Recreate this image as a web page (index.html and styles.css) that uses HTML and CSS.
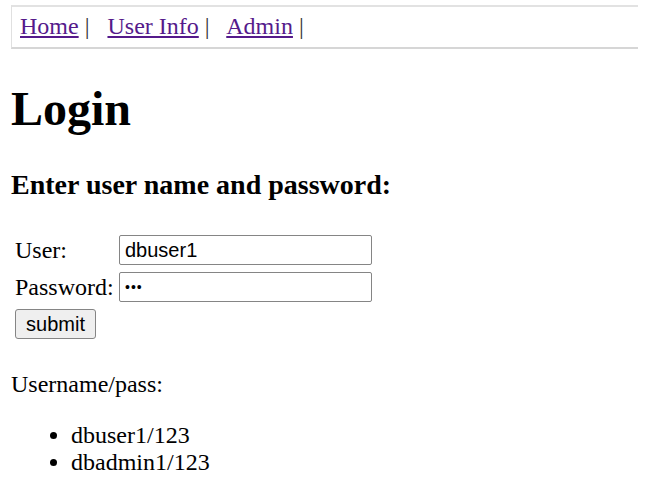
FILE: index.html
```html
<!DOCTYPE html>
<html>
<head>
<meta charset="utf-8">
<title>Login</title>
<link rel="stylesheet" href="styles.css">
</head>
<body>
<div class="nav"><a href="#">Home</a> | &nbsp; <a href="#">User Info</a> | &nbsp; <a href="#">Admin</a> |</div>
<h1 class="title">Login</h1>
<h3 class="subtitle">Enter user name and password:</h3>
<form class="login-form">
  <label class="field-label" for="user">User:</label>
  <input class="field-input" id="user" type="text" value="dbuser1">
  <label class="field-label" for="pass">Password:</label>
  <input class="field-input field-secret" id="pass" type="password" value="123">
  <button class="submit-btn" type="button">submit</button>
</form>
<p class="hint">Username/pass:</p>
<ul class="accounts">
  <li>dbuser1/123</li>
  <li>dbadmin1/123</li>
</ul>
</body>
</html>
```

FILE: styles.css
```css
html, body {
  background: #ffffff;
}
body {
  margin: 5px 8px 0 11px;
  font-family: "Liberation Serif", "Times New Roman", serif;
  font-size: 24px;
  line-height: 27px;
  color: #000000;
}
.nav {
  border-top: 2px solid #e2e2e2;
  border-bottom: 2px solid #d6d6d6;
  border-left: 1px solid #e0e0e0;
  border-right: none;
  padding: 6px 0 7px 8px;
  line-height: 27px;
  color: #333333;
}
.nav a {
  color: #551a8b;
  text-decoration: underline;
}
.title {
  font-size: 48px;
  line-height: 55px;
  font-weight: bold;
  margin: 32px 0 32px 0;
}
.subtitle {
  font-size: 28px;
  line-height: 32px;
  font-weight: bold;
  margin: 33px 0 0 0;
}
.login-form {
  display: grid;
  grid-template-columns: 98px 253px;
  grid-auto-rows: 30px;
  column-gap: 6px;
  row-gap: 7px;
  align-items: center;
  margin: 34px 0 0 4px;
  width: max-content;
}
.field-label {
  line-height: 27px;
}
.field-input {
  box-sizing: border-box;
  width: 253px;
  height: 30px;
  border: 1px solid #858585;
  border-radius: 2px;
  padding: 1px 5px;
  font-family: "Liberation Sans", Arial, sans-serif;
  font-size: 20px;
  color: #000000;
  background: #ffffff;
}
.field-secret {
  font-size: 14px;
  letter-spacing: 1px;
  padding-left: 5px;
}
.submit-btn {
  grid-column: 1;
  justify-self: start;
  box-sizing: border-box;
  width: 81px;
  height: 30px;
  padding: 0 10px;
  border: 1px solid #858585;
  border-radius: 3px;
  background: #efefef;
  font-family: "Liberation Sans", Arial, sans-serif;
  font-size: 20px;
  color: #000000;
}
.hint {
  margin: 32px 0 24px 0;
}
.accounts {
  margin: 24px 0;
  padding-left: 60px;
}
```
